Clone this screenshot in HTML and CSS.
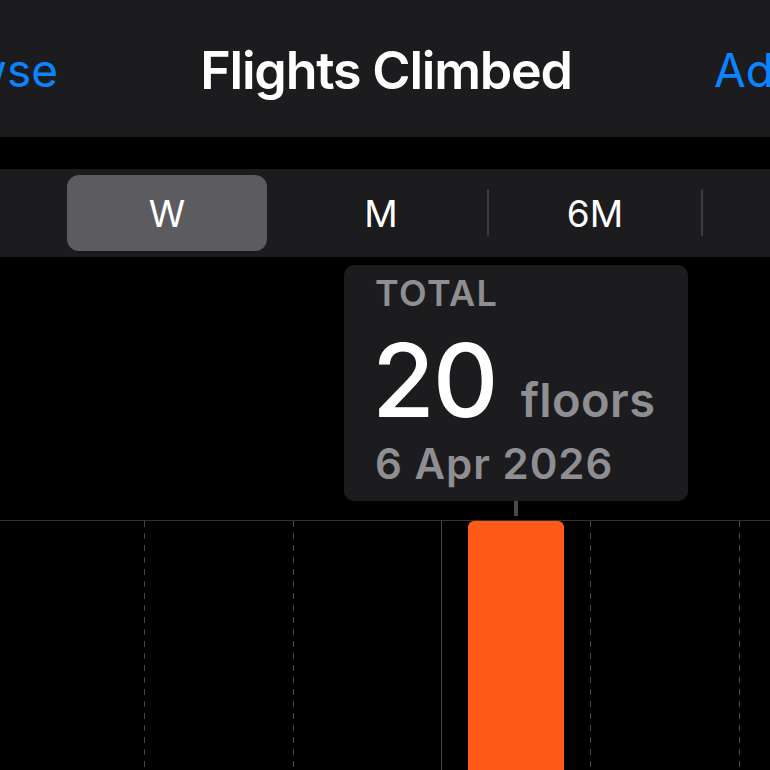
FILE: index.html
```html
<!DOCTYPE html>
<html lang="en">
<head>
  <meta charset="UTF-8" />
  <meta name="viewport" content="width=device-width, initial-scale=1.0" />
  <title>Flights Climbed</title>
  <link rel="stylesheet" href="styles.css">
</head>
<body>
  <header class="navbar">
    <div class="nav-back"><span>Browse</span></div>
    <h1 class="nav-title">Flights Climbed</h1>
    <div class="nav-action"><span>Add Data</span></div>
  </header>

  <div class="segmented">
    <div class="segment">D</div>
    <div class="segment selected">W</div>
    <div class="segment">M</div>
    <div class="segment divided">6M</div>
    <div class="segment divided">Y</div>
  </div>

  <div class="chart">
    <div class="tooltip">
      <div class="tooltip-box">
        <div class="tooltip-label">TOTAL</div>
        <div class="tooltip-value">
          <span class="value">20</span>
          <span class="unit">floors</span>
        </div>
        <div class="tooltip-date">6 Apr 2026</div>
      </div>
      <div class="tooltip-stem"></div>
    </div>

    <div class="plot">
      <div class="col"></div>
      <div class="col dashed"></div>
      <div class="col dashed"></div>
      <div class="col solid"><div class="bar"></div></div>
      <div class="col dashed"></div>
      <div class="col dashed"></div>
    </div>
  </div>
</body>
</html>
```

FILE: styles.css
```css
html, body {
  overflow: hidden;
}

body {
  margin: 0;
  width: 770px;
  height: 770px;
  background: #000;
  color: #fff;
  font-family: Inter, 'Liberation Sans', sans-serif;
}

/* navigation bar */
.navbar {
  display: flex;
  align-items: center;
  height: 137px;
  padding-top: 3px;
  box-sizing: border-box;
  background: #1c1c1e;
}

.nav-back, .nav-action {
  display: flex;
  width: 58px;
  white-space: nowrap;
  font-size: 46px;
  color: #0a84ff;
}

.nav-back {
  justify-content: flex-end;
}

.nav-action {
  width: 56px;
  justify-content: flex-start;
}

.nav-title {
  flex: 1;
  margin: 0;
  text-align: center;
  font-size: 52px;
  font-weight: 600;
  letter-spacing: -1.2px;
}

/* period picker */
.segmented {
  display: flex;
  height: 88px;
  margin-top: 32px;
  margin-left: -154px;
  background: #1c1c1e;
}

.segment {
  flex: 0 0 214px;
  position: relative;
  isolation: isolate;
  display: flex;
  align-items: center;
  justify-content: center;
  font-size: 37px;
  font-weight: 400;
}

.segment.selected::before {
  content: "";
  position: absolute;
  inset: 6px 7px;
  border-radius: 12px;
  background: #5c5b60;
  z-index: -1;
}

.segment.divided::after {
  content: "";
  position: absolute;
  left: -1px;
  top: 20px;
  width: 2px;
  height: 47px;
  border-radius: 1px;
  background: #3d3d40;
}

/* chart */
.chart {
  position: relative;
  padding-top: 263px;
}

.tooltip {
  position: absolute;
  top: 8px;
  left: 344px;
  width: 344px;
  display: flex;
  flex-direction: column;
  align-items: center;
}

.tooltip-box {
  align-self: stretch;
  padding: 10px 20px 17px 31px;
  border-radius: 10px;
  background: #1c1c1e;
}

.tooltip-label {
  font-size: 36px;
  line-height: 36px;
  font-weight: 600;
  letter-spacing: 1.4px;
  color: #8e8e93;
}

.tooltip-value {
  display: flex;
  align-items: baseline;
  gap: 24px;
  margin-top: 18px;
}

.value {
  margin-left: -3px;
  font-size: 102px;
  line-height: 102px;
  font-weight: 500;
  letter-spacing: -2px;
}

.unit {
  font-size: 47px;
  font-weight: 600;
  letter-spacing: 0.4px;
  color: #8e8e93;
}

.tooltip-date {
  margin-top: 12px;
  font-size: 42px;
  line-height: 41px;
  font-weight: 600;
  letter-spacing: 1px;
  color: #8e8e93;
}

.tooltip-stem {
  width: 4px;
  height: 15px;
  background: #4a4a4c;
}

.plot {
  display: flex;
  height: 260px;
  margin-left: -5px;
  border-top: 1px solid #333336;
}

.col {
  flex: 0 0 148.75px;
  display: flex;
  justify-content: center;
}

.col.dashed {
  background: repeating-linear-gradient(to bottom, #48484a 0 6px, transparent 6px 12px) left top / 1px 100% no-repeat;
}

.col.solid {
  background: linear-gradient(#48484a, #48484a) left top / 1px 100% no-repeat;
}

.bar {
  width: 96px;
  height: 100%;
  border-radius: 6px 6px 0 0;
  background: #ff5a17;
}
```
